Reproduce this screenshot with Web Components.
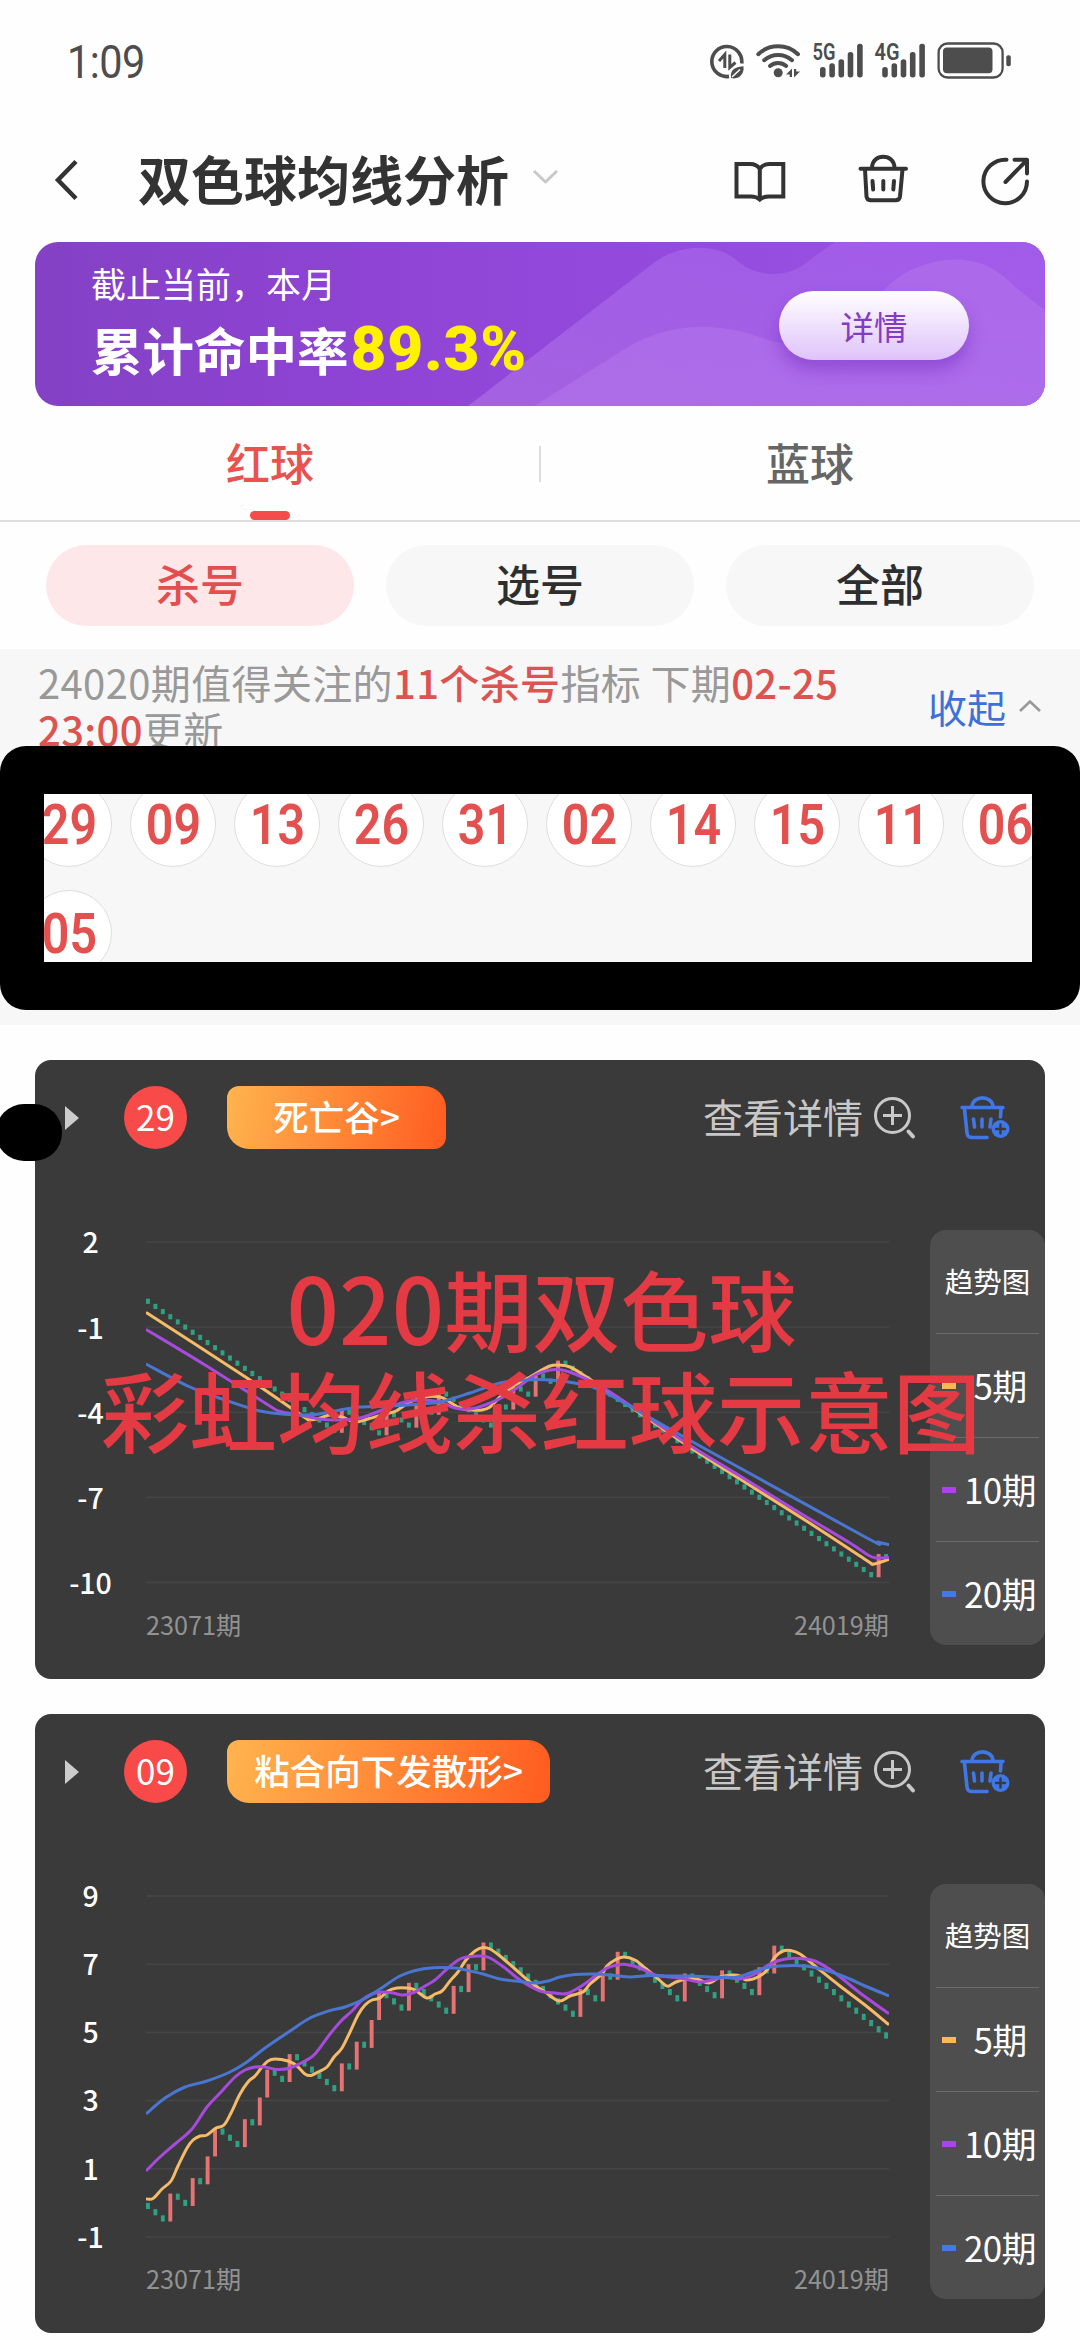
<!DOCTYPE html>
<html lang="zh-CN">
<head>
<meta charset="utf-8">
<title>双色球均线分析</title>
<style>
html,body{margin:0;padding:0;background:#fefefe}
body{width:1080px;height:2340px;overflow:hidden;font-family:"Noto Sans CJK SC","Noto Sans",sans-serif;color:#333}
</style>
</head>
<body>
<analysis-app></analysis-app>
<script>
const define = (name, html, setup) => {
  const tpl = document.createElement('template');
  tpl.innerHTML = '<style>*{box-sizing:border-box}svg{display:block}</style>' + html;
  customElements.define(name, class extends HTMLElement {
    connectedCallback() {
      if (this.shadowRoot) return;
      const root = this.attachShadow({mode: 'open'});
      root.append(tpl.content.cloneNode(true));
      if (setup) setup(this, root);
    }
  });
};

/* ---------- status bar ---------- */
const signal = x => [[0,67],[9.3,63.3],[18.5,59.3],[27.7,52],[37.1,43.7]]
  .map(([dx, y]) => `<rect x="${x + dx - 2.8}" y="${y}" width="5.6" height="${77.4 - y}" rx="2.6"/>`).join('');
define('status-bar', `
<style>
:host{display:flex;height:120px;padding:30px 60px 0 67px;justify-content:space-between;color:#4d4d4d}
.time{font:400 46px/64px Roboto,sans-serif;transform:scaleX(.9);transform-origin:0 50%;letter-spacing:-.6px}
</style>
<span class="time">1:09</span>
<svg width="310" height="60" viewBox="710 30 310 60" fill="#4d4d4d">
  <path d="M741.7 63.5A15 15 0 1 0 729 76.4" fill="none" stroke="#4d4d4d" stroke-width="3.6"/>
  <path d="M719 61L724.8 54.5V68M729.8 54.500V67.5L735.500 62.500" fill="none" stroke="#4d4d4d" stroke-width="3"/>
  <path d="M731 78C729.500 69 737 66.500 743.500 66.300C744.500 74 739 80 731 78Z"/>
  <path d="M732 77L740 69.500" stroke="#fefefe" stroke-width="1.500"/>
  <g fill="none" stroke="#4d4d4d" stroke-width="4" stroke-linecap="round">
    <path d="M758.300 54.200A29 29 0 0 1 798 54.200"/><path d="M764.200 60.200A21 21 0 0 1 792 60.200"/><path d="M770 66A12.500 12.500 0 0 1 786.200 66"/>
  </g>
  <circle cx="778.200" cy="72.700" r="4.500"/>
  <path d="M786 74.500L792 68.500V77H789.700V74.500ZM794 69H796.200V71.500H800L794 77.500Z"/>
  <text x="812.500" y="60.300" font-family="Roboto,sans-serif" font-weight="600" font-size="23" textLength="23" lengthAdjust="spacingAndGlyphs">5G</text>
  ${signal(822.8)}
  <text x="874.500" y="60.300" font-family="Roboto,sans-serif" font-weight="600" font-size="23" textLength="25" lengthAdjust="spacingAndGlyphs">4G</text>
  ${signal(885)}
  <rect x="938.600" y="43.500" width="64" height="34" rx="9" fill="none" stroke="#4d4d4d" stroke-width="2.300"/>
  <rect x="943" y="47.500" width="49.500" height="25.800" rx="4"/>
  <rect x="1006.300" y="55.200" width="4.500" height="11" rx="2"/>
</svg>`);

/* ---------- navigation bar ---------- */
define('nav-bar', `
<style>
:host{display:flex;height:122px;padding:0 46px 0 50px;align-items:center}
.title{font-weight:700;font-size:53px;line-height:70px;margin:0 23px 0 58px;white-space:nowrap;color:#333;padding-bottom:7px}
.tools{margin-left:auto;display:flex;gap:67px;align-items:center}
svg{fill:none;stroke:#333;stroke-width:4;stroke-linejoin:round;stroke-linecap:round}
</style>
<svg width="30" height="48" viewBox="50 156 30 48" style="stroke-width:4.500"><path d="M76 160.500L58 179L76 197.500" stroke-linecap="butt" stroke-linejoin="miter"/></svg>
<span class="title"><slot></slot></span>
<svg width="28" height="20" viewBox="532 170 28 20" style="stroke:#c8c8c8;stroke-width:3;margin-bottom:6px"><path d="M534 173L545.500 184L557 173" stroke-linecap="butt"/></svg>
<div class="tools">
<svg width="56" height="54" viewBox="732 154 56 54"><path d="M759.800 169C757 164.500 754 164 750 164H736.500V196.500H751C755 196.500 757 197 759.800 199.500C762.600 197 765 196.500 769 196.500H783.300V164H769.500C765.500 164 762.500 164.500 759.800 169ZM759.800 169V199" stroke-linejoin="miter"/></svg>
<svg width="56" height="54" viewBox="854 154 56 54"><path d="M859.500 168.700H905M871 168C871 153 893.500 153 893.500 168M864 169.500L865.500 196.500Q866 200.300 870 200.300H894.500Q898.500 200.300 899 196.500L901.500 169.500M871.500 181L872.200 189.500M882.300 181V189.500M893 181L892.300 189.500"/></svg>
<svg width="56" height="54" viewBox="978 154 56 54"><path d="M1006.500 159.700A21.800 21.800 0 1 0 1027 181.500M1014.500 159.700H1027V173.500M1026.500 160.500L1005.500 182"/></svg>
</div>`);

/* ---------- hit-rate banner ---------- */
define('hit-banner', `
<style>
:host{display:grid;width:1010px;height:164px;margin:0 35px;border-radius:23px;overflow:hidden;background:linear-gradient(90deg,#8441c5,#8f44d5 35%,#954ddf 70%,#9b55e2);color:#fff}
:host>*{grid-area:1/1}
.row{display:flex;justify-content:space-between;align-items:center;padding:0 76px 0 56px}
.copy{display:flex;flex-direction:column;padding-bottom:1px}
.a{font-size:35px;line-height:50px}
.b{display:flex;align-items:center;font-weight:700;font-size:51.500px;line-height:80px;height:82px;white-space:nowrap}
.b b{font-family:Roboto,sans-serif;font-size:62px;color:#fff100;margin-left:2px;letter-spacing:.8px;padding-top:1px}
.btn{width:190px;height:69px;margin-top:3px;border-radius:35px;background:linear-gradient(#fff,#dfc3fa);box-shadow:0 10px 16px rgba(110,40,190,.45);color:#843bc4;font-size:33.500px;line-height:70px;text-align:center}
</style>
<svg width="1010" height="164">
<defs><linearGradient id="w" x1="0" y1="1" x2="1" y2="0"><stop offset="0" stop-color="#a767e2"/><stop offset="1" stop-color="#a35ceb"/></linearGradient></defs>
<path fill="url(#w)" fill-opacity=".85" d="M433 164L620 20C645 2 680 1 700 17C722 38 757 36 776 17L800 0H1010V164Z"/>
<path fill="#b577ee" fill-opacity=".5" d="M499 164L585 110C625 83 675 76 730 97C770 110 800 100 847 50C875 18 935 2 973 38C985 50 1000 60 1010 68V164Z"/>
</svg>
<div class="row"><div class="copy"><span class="a">截止当前，本月</span><span class="b">累计命中率<b>89.3%</b></span></div><div class="btn">详情</div></div>`);

/* ---------- tabs and filters ---------- */
define('ball-tabs', `
<style>
:host{display:flex;height:116px;border-bottom:2px solid #dedede}
div{flex:1;display:flex;flex-direction:column;align-items:center;justify-content:flex-end;font-size:44px;font-weight:500;line-height:64px;color:#666}
.on{color:#e8524f}
i{width:40px;height:9px;border-radius:5px;background:#f44b4b;margin-top:17px}
div:not(.on) i{background:none}
hr{width:2px;height:36px;margin:40px -1px 0;border:0;background:#ddd}
</style>
<div class="on">红球<i></i></div><hr><div>蓝球<i></i></div>`);

define('filter-pills', `
<style>
:host{display:flex;gap:32px;padding:23px 46px;height:127px}
span{flex:1;border-radius:41px;background:#f7f7f7;font-size:44px;font-weight:500;line-height:77px;text-align:center;color:#2e2e2e}
.on{background:#fee7e9;color:#e24f4e}
</style>
<span class="on">杀号</span><span>选号</span><span>全部</span>`);

/* ---------- pick panel ---------- */
define('pick-ball', `
<style>
:host{display:flex;width:86px;height:86px;border-radius:50%;background:#fff;border:1.500px solid #dedede;align-items:center;justify-content:center}
span{font:600 55px/60px Roboto,sans-serif;color:#e2514f;transform:scaleX(.88);padding-top:2px}
</style><span><slot></slot></span>`);

define('pick-panel', `
<style>
:host{display:block;position:relative;height:376px;background:#f7f7f7;padding:10px 0 0 38px}
.head{display:flex;justify-content:space-between;padding-right:38px}
p{margin:0;width:830px;font-size:40px;line-height:47px;color:#999;letter-spacing:.36px}
p b{font-weight:500;color:#dc5350}
.fold{display:flex;align-items:center;gap:12px;font-size:39px;line-height:50px;margin-top:22px;height:50px;color:#3d71d8}
.balls{display:flex;flex-wrap:wrap;gap:22.500px 18px;margin:28px -40px 0 -12px}
.mask{position:absolute;left:0;top:97px;width:1080px;height:264px;border:solid #000;border-width:48px 48px 48px 44px;border-radius:26px}
</style>
<div class="head"><p>24020期值得关注的<b>11个杀号</b>指标 下期<b>02-25 23:00</b>更新</p>
<span class="fold">收起<svg width="24" height="14" viewBox="0 0 24 14" fill="none" stroke="#999" stroke-width="2.600"><path d="M2 12L12 2.500L22 12"/></svg></span></div>
<div class="balls"></div><div class="mask"></div>`, (el, root) => {
  root.querySelector('.balls').innerHTML = el.getAttribute('numbers').split(' ').map(n => `<pick-ball>${n}</pick-ball>`).join('');
});

/* ---------- trend chart ---------- */
const curve = pts => {
  let d = `M${pts[0]}`;
  for (let i = 0; i < pts.length - 1; i++) {
    const a = pts[i - 1] || pts[i], b = pts[i], c = pts[i + 1], e = pts[i + 2] || c;
    d += `C${b[0] + (c[0] - a[0]) / 6} ${b[1] + (c[1] - a[1]) / 6} ${c[0] - (e[0] - b[0]) / 6} ${c[1] - (e[1] - b[1]) / 6} ${c[0]} ${c[1]}`;
  }
  return d;
};
const parse = s => s.trim().split(/\s+/).map(p => p.split(',').map(Number));

const charts = {
  29: {
    tag: '死亡谷>', width: 219, labels: [2, -1, -4, -7, -10], top: 1060, first: 1242, step: 85.1, unit: 28.37, zero: 1298.700,
    hits: [26, 32, 36, 39, 47, 49, 52, 55, 98],
    ma5: '147,1313 247,1378 304,1417 309,1419.500 317,1419 330,1415 342,1417 355,1422 368,1419 385,1414 396,1411 410,1402 425,1397 440,1397 448,1401 460,1408 472,1410 482,1410 490,1407 500,1397 515,1385 530,1377 540,1371 550,1366 558,1365 570,1367 585,1376 600,1386 625,1403 650,1420 691,1448 740,1479 808,1522 866,1560 872,1564 878,1563 888,1559.500',
    ma10: '147,1330 205,1365 265,1403 280,1411.500 300,1415 320,1419 335,1420 360,1418 390,1407 405,1402 420,1400 440,1402 455,1408 470,1409 485,1405 505,1396 525,1382 535,1375 550,1370 562,1370 575,1374 600,1386 625,1402 691,1446 740,1476 800,1513 850,1543 868,1555 876,1558 888,1557.500',
    ma20: '147,1364.500 190,1387 225,1400 260,1411 290,1414.500 315,1414.500 340,1410 360,1407 390,1406 420,1404 440,1402 470,1393 500,1383 525,1380 550,1380 580,1384 600,1390 640,1412 691,1441 740,1468 867,1538 878,1542 888,1544.500'
  },
  '09': {
    tag: '粘合向下发散形>', width: 323, labels: [9, 7, 5, 3, 1, -1], top: 1714, first: 1896, step: 68.2, unit: 34.1, zero: 2202.900,
    hits: [3, 6, 8, 9, 13, 15, 16, 19, 26, 28, 30, 31, 35, 41, 43, 45, 58, 61, 63, 72, 77, 82, 84],
    ma5: '147,2199 153,2198.500 162,2189 171,2181 178,2166 187,2148 193,2140 200,2136 207,2135 216,2128 224,2125 231,2113 240,2094 248,2082 255,2076 262,2067 268,2061 275,2059 288,2061 297,2066 305,2074 311,2075.500 318,2072 327,2067 334,2057 342,2048 350,2032 358,2015 365,2005 372,2000 380,1998 388,1991 397,1988 407,1988 415,1990 427,1998 435,1994 442,1991 450,1981 458,1972 466,1960 475,1951 483,1947.500 490,1949 500,1956 515,1969 530,1982 545,1992 559,2001 570,1996 583,1992 590,1984 602,1974 607,1966 615,1960 624,1957 635,1960 645,1968 655,1976 665,1985 669,1986 676,1982 687,1979 697,1979 709,1983 720,1977 732,1975 740,1976 746,1980 758,1977 767,1970 775,1957 783,1951 790,1950.500 800,1954 815,1966 840,1986 865,2005 888,2024',
    ma10: '147,2170 160,2157 175,2144 192,2129 207,2107 222,2091 235,2077 245,2070 255,2067 265,2067 277,2069.500 290,2068 305,2061 315,2054 330,2034 342,2020 352,2011 362,2000 372,1994 382,1992 393,1993 403,1995 415,1992 425,1986 435,1980 448,1968 460,1959 470,1956.500 480,1956 490,1958 505,1968 520,1980 540,1991 555,1993 567,1993.500 583,1985 595,1976 607,1968 617,1965 626,1964.500 640,1968 655,1975 670,1977 685,1979 700,1982 712,1980 725,1977 740,1979 755,1974 770,1964 785,1959 800,1958.500 815,1961 835,1973 860,1993 888,2013',
    ma20: '147,2113 165,2098 185,2087 207,2081 230,2072 247,2062 265,2048 290,2031 310,2018 330,2010.500 345,2007 362,2000 380,1989 400,1976 420,1969.500 440,1967.500 455,1968 470,1971 483,1974 500,1979 520,1981.500 535,1983 548,1981 560,1977 575,1974.500 595,1974 615,1975.500 630,1977 650,1975.500 670,1976 690,1976 710,1977 735,1977.500 750,1973 765,1968 780,1966 805,1966 825,1970 845,1977 865,1986 888,1995.500'
  }
};

define('trend-plot', `
<style>
:host{display:grid;grid-template-columns:111px 743px;grid-template-rows:372px 44px}
.y{display:flex;flex-direction:column;align-items:center;color:#fff;font-weight:500;font-size:28.500px}
.y span{height:var(--step);line-height:calc(var(--step) - 2px);flex:none}
.x{grid-column:2;display:flex;justify-content:space-between;font-size:25.200px;line-height:44px;color:#929292}
</style>
<div class="y"></div><svg width="743" height="372"></svg><div class="x"><span>23071期</span><span>24019期</span></div>`, (el, root) => {
  const c = charts[el.getAttribute('ball')], oy = c.top + 170;
  const y = root.querySelector('.y');
  y.style.setProperty('--step', c.step + 'px');
  y.style.marginTop = (c.first - oy - c.step / 2) + 'px';
  y.innerHTML = c.labels.map(l => `<span>${l}</span>`).join('');
  let g = c.labels.map((_, i) => `<rect x="146" y="${c.first - .8 + i * c.step}" width="743" height="1.600" fill="#454545"/>`).join('');
  let v = 0;
  for (let i = 0; i < 100; i++) {
    const hit = c.hits.includes(i), n = v + (hit ? 9 : -2) / 11;
    g += `<rect x="${146 + i * 7.456}" y="${c.zero - Math.max(v, n) * c.unit}" width="3.900" height="${Math.abs(n - v) * c.unit}" fill="${hit ? '#e57373' : '#2fa183'}"/>`;
    v = n;
  }
  [['ma5', '#f5bb68'], ['ma10', '#a74bdc'], ['ma20', '#4a76d2']].forEach(([k, color]) => {
    g += `<path d="${curve(parse(c[k]))}" fill="none" stroke="${color}" stroke-width="3" stroke-linecap="round"/>`;
  });
  const svg = root.querySelector('svg');
  svg.setAttribute('viewBox', `146 ${oy} 743 372`);
  svg.innerHTML = g;
});

define('legend-item', `
<style>
:host{display:flex;height:104px;margin:0 6px;border-top:1.500px solid #6c6c6c;align-items:center;padding-left:6px}
i{width:14px;height:6px;background:var(--c);flex:none}
span{flex:1;text-align:center;font-size:35px;font-weight:400;line-height:50px;letter-spacing:-.6px;margin-right:-3px;padding:0 0 2px 2px;white-space:nowrap}
</style><i></i><span><slot></slot></span>`);

define('trend-card', `
<style>
:host{display:block;width:1010px;height:618.500px;margin:0 35px;border-radius:16px;background:#3a3a3a;overflow:hidden;color:#fff}
.head{display:flex;align-items:center;height:113px;padding:2px 0 0 30px}
.tri{width:0;height:0;border:solid transparent;border-width:12px 0 12px 14px;border-left-color:#ccc}
.num{width:63px;height:63px;border-radius:50%;background:#f94a4a;margin:0 40px 0 45px;font-size:35px;font-weight:400;line-height:60px;text-align:center}
.tag{height:63px;border-radius:12px 22px 12px 22px;background:linear-gradient(100deg,#ffb44e,#ff5c20);font-size:35.500px;font-weight:500;line-height:60px;text-align:center;white-space:nowrap}
.more{display:flex;align-items:center;gap:11px;margin-left:auto;margin-right:42px;font-size:40px;color:#c8c8c8}
.more b{font-weight:400;line-height:56px;padding-bottom:4px}
.cart{margin-right:34px}
.body{display:flex;padding-top:57px}
.legend{width:115px;height:415px;margin-left:41px;border-radius:16px;background:#4e4e4e}
.legend h4{margin:0;height:103px;font-size:28.500px;font-weight:400;line-height:102px;text-align:center}
</style>
<div class="head"><i class="tri"></i><span class="num"></span><span class="tag"></span>
<span class="more"><b>查看详情</b><svg width="43" height="44" viewBox="0 0 43 44" fill="none" stroke="#c8c8c8" stroke-width="3"><circle cx="18.500" cy="19.500" r="17"/><path d="M9 19.500H28M18.500 10V29"/><path d="M34.500 35.500L39 40.500" stroke-width="4" stroke-linecap="round"/></svg></span>
<svg class="cart" width="52" height="44" viewBox="0 0 52 44" fill="none" stroke="#3f77e6" stroke-width="3.600" stroke-linecap="round" stroke-linejoin="round"><path d="M3 11.500H44M13 10.500C14 -1 33 -1 34 10.500M5.500 13L8 37Q8.500 41.500 13 41.500H28M42 13L41.500 21M14.500 23L15.500 31M23 23V31M32 23L31 31"/><circle cx="41.500" cy="33" r="9" fill="#3f77e6" stroke="none"/><path d="M41.500 28.500V37.500M37 33H46" stroke="#3a3a3a" stroke-width="2.400"/></svg></div>
<div class="body"><div class="plot"></div><div class="legend"><h4>趋势图</h4>
<legend-item style="--c:#fdb757">5期</legend-item><legend-item style="--c:#aa43ee">10期</legend-item><legend-item style="--c:#4478e5">20期</legend-item></div></div>`, (el, root) => {
  const id = el.getAttribute('ball'), c = charts[id];
  root.querySelector('.num').textContent = id;
  const tag = root.querySelector('.tag');
  tag.textContent = c.tag;
  tag.style.width = c.width + 'px';
  root.querySelector('.plot').innerHTML = `<trend-plot ball="${id}"></trend-plot>`;
});

/* ---------- page ---------- */
define('caption-note', `
<style>
:host{position:absolute;left:0;top:1253px;width:1080px;text-align:center;color:#e43a43;font-size:88px;font-weight:500;line-height:103px;white-space:nowrap}
div{height:103px}
span{font-size:92px;letter-spacing:.3px}
</style>
<div style="margin-left:3px"><span>020</span>期双色球</div><div style="margin-left:2px">彩虹均线杀红球示意图</div>`);

define('analysis-app', `
<style>
:host{display:block;position:relative;width:1080px;height:2340px;overflow:hidden;background:#fefefe}
.cards{display:flex;flex-direction:column;gap:35.500px;padding-top:35px}
.blot{position:absolute;left:-4px;top:1104px;width:66px;height:57px;border-radius:28px;background:#000}
</style>
<status-bar></status-bar>
<nav-bar>双色球均线分析</nav-bar>
<hit-banner></hit-banner>
<ball-tabs></ball-tabs>
<filter-pills></filter-pills>
<pick-panel numbers="29 09 13 26 31 02 14 15 11 06 05"></pick-panel>
<div class="cards"><trend-card ball="29"></trend-card><trend-card ball="09"></trend-card></div>
<div class="blot"></div>
<caption-note></caption-note>`);
</script>
</body>
</html>
